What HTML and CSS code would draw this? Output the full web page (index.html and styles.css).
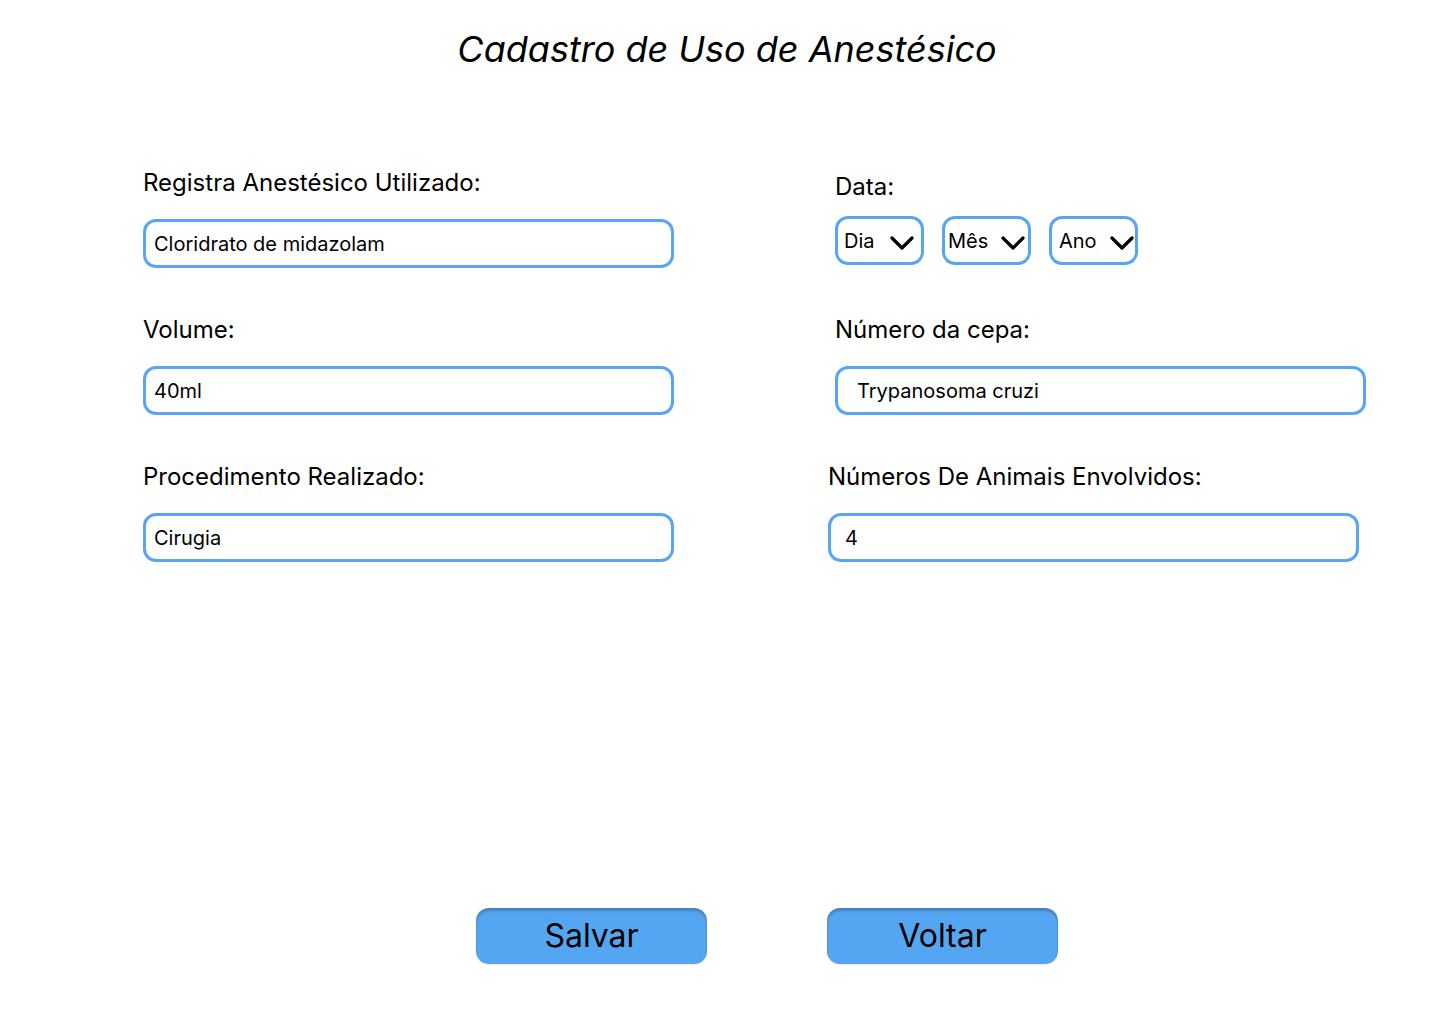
FILE: index.html
```html
<!DOCTYPE html>
<html lang="pt-BR">
<head>
<meta charset="utf-8">
<title>Cadastro de Uso de Anestésico</title>
<link rel="stylesheet" href="styles.css">
</head>
<body>
<div class="page">
  <h1 class="title">Cadastro de Uso de Anestésico</h1>
  <div class="form">
    <div class="col col-left">
      <div class="field">
        <div class="label">Registra Anestésico Utilizado:</div>
        <div class="input">Cloridrato de midazolam</div>
      </div>
      <div class="field">
        <div class="label">Volume:</div>
        <div class="input">40ml</div>
      </div>
      <div class="field">
        <div class="label">Procedimento Realizado:</div>
        <div class="input">Cirugia</div>
      </div>
    </div>
    <div class="col col-right">
      <div class="field field-date">
        <div class="label label-date">Data:</div>
        <div class="selects">
          <div class="select sel-dia"><span>Dia</span><svg class="chev" viewBox="0 0 24 16" width="24" height="16"><path d="M2 3 L12 13 L22 3" fill="none" stroke="#000" stroke-width="3.2" stroke-linecap="round" stroke-linejoin="round"/></svg></div>
          <div class="select sel-mes"><span>Mês</span><svg class="chev" viewBox="0 0 24 16" width="24" height="16"><path d="M2 3 L12 13 L22 3" fill="none" stroke="#000" stroke-width="3.2" stroke-linecap="round" stroke-linejoin="round"/></svg></div>
          <div class="select sel-ano"><span>Ano</span><svg class="chev" viewBox="0 0 24 16" width="24" height="16"><path d="M2 3 L12 13 L22 3" fill="none" stroke="#000" stroke-width="3.2" stroke-linecap="round" stroke-linejoin="round"/></svg></div>
        </div>
      </div>
      <div class="field">
        <div class="label">Número da cepa:</div>
        <div class="input input-cepa">Trypanosoma cruzi</div>
      </div>
      <div class="field field-shift">
        <div class="label">Números De Animais Envolvidos:</div>
        <div class="input input-num">4</div>
      </div>
    </div>
  </div>
  <div class="actions">
    <button class="btn">Salvar</button>
    <button class="btn">Voltar</button>
  </div>
</div>
</body>
</html>
```

FILE: styles.css
```css
* { box-sizing: border-box; }
html, body { margin: 0; padding: 0; background: #fff; }
body {
  font-family: Inter, "Noto Sans", sans-serif;
  color: #000;
  width: 1440px;
  height: 1024px;
  overflow: hidden;
}
.page { display: flex; flex-direction: column; height: 1024px; }
.title {
  margin: 26px 0 0 0;
  padding-left: 14px;
  font-size: 36px;
  font-style: italic;
  font-weight: 400;
  line-height: 46px;
  text-align: center;
}
.form {
  display: flex;
  gap: 161px;
  padding-left: 143px;
  margin-top: 97px;
}
.col { display: flex; flex-direction: column; width: 531px; gap: 48px; }
.field { display: flex; flex-direction: column; }
.label {
  font-size: 24px;
  line-height: 28px;
  height: 28px;
  margin-bottom: 22px;
}
.label-date { margin-top: 4px; margin-bottom: 15px; }
.selects { display: flex; gap: 18px; margin-bottom: 3px; }
.input {
  height: 49px;
  border: 3px solid #58a6f1;
  border-radius: 13px;
  padding: 0 0 0 8px;
  font-size: 20px;
  line-height: 45px;
}
.input-cepa { padding-left: 19px; }
.field-shift { margin-left: -7px; width: 531px; }
.input-num { padding-left: 14px; }
.select {
  width: 89px;
  height: 49px;
  border: 3px solid #58a6f1;
  border-radius: 13px;
  display: flex;
  align-items: center;
  justify-content: space-between;
  padding: 0 7px 0 6px;
  font-size: 20px;
}
.select span { margin-top: 0; }
.sel-mes { padding-left: 3px; padding-right: 3px; }
.sel-ano { padding-left: 7px; padding-right: 1px; }
.chev { display: block; margin-top: 4px; }
.actions {
  display: flex;
  gap: 120px;
  padding-left: 476px;
  margin-top: auto;
  margin-bottom: 60px;
}
.btn {
  width: 231px;
  height: 56px;
  background: #55a6f2;
  border: none;
  border-radius: 13px;
  box-shadow: inset 0 3px 3px rgba(0, 0, 0, 0.22), 0 1px 1px rgba(0, 0, 0, 0.08);
  font-family: Inter, "Noto Sans", sans-serif;
  font-size: 32px;
  color: #000;
  padding: 0;
  line-height: 56px;
}
```
